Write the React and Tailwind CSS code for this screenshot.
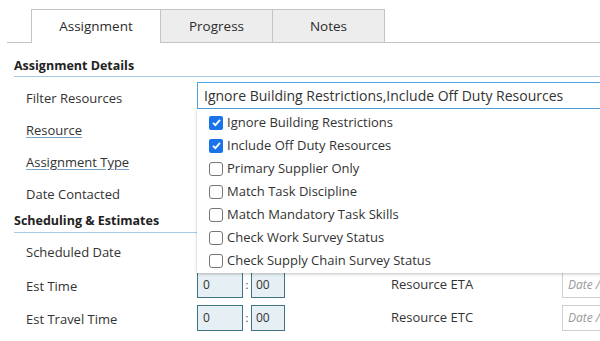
import React from "react";

const options = [
  { label: "Ignore Building Restrictions", checked: true },
  { label: "Include Off Duty Resources", checked: true },
  { label: "Primary Supplier Only", checked: false },
  { label: "Match Task Discipline", checked: false },
  { label: "Match Mandatory Task Skills", checked: false },
  { label: "Check Work Survey Status", checked: false },
  { label: "Check Supply Chain Survey Status", checked: false },
];

const Check = ({ checked }) =>
  checked ? (
    <span className="w-[14px] h-[14px] rounded-[2px] bg-[#1a73e8] flex items-center justify-center shrink-0">
      <svg width="11" height="11" viewBox="0 0 12 12">
        <path d="M2.2 6.3 L4.8 8.9 L9.8 3.2" fill="none" stroke="#fff" strokeWidth="2" />
      </svg>
    </span>
  ) : (
    <span className="w-[14px] h-[14px] rounded-[3px] border border-[#767676] bg-white shrink-0" />
  );

const Tab = ({ label, active }) => (
  <div
    className={
      active
        ? "w-[130px] h-[34px] flex items-center justify-center border border-b-0 border-[#c4c4c4] bg-white text-[13.5px] text-[#2b2b2b]"
        : "w-[112px] h-[34px] flex items-center justify-center border border-l-0 border-[#c4c4c4] bg-[#ededed] text-[13.5px] text-[#2b2b2b]"
    }
  >
    {label}
  </div>
);

const Row = ({ label, link, h, children }) => (
  <div className={`flex items-center ${h}`}>
    <div className="w-[197px] pl-[26px] shrink-0">
      <span
        className={
          link
            ? "text-[13px] text-[#333] underline decoration-[#7aa4cc] underline-offset-2"
            : "text-[13px] text-[#333]"
        }
      >
        {label}
      </span>
    </div>
    {children}
  </div>
);

const TimeBoxes = () => (
  <div className="flex items-center">
    <div className="w-[46px] h-[26px] bg-[#e5eff4] border border-[#3f7482] text-[12px] text-[#333] pl-[5px] flex items-center">
      0
    </div>
    <span className="w-[8px] text-center text-[11px] text-[#333]">:</span>
    <div className="w-[34px] h-[26px] bg-[#e5eff4] border border-[#3f7482] text-[12px] text-[#333] pl-[4px] flex items-center">
      00
    </div>
  </div>
);

const DateBox = () => (
  <div className="ml-auto w-[38px] h-[26px] border border-r-0 border-[#cfcfcf] pl-[5px] flex items-center text-[12px] italic text-[#9a9a9a] overflow-hidden whitespace-nowrap">
    Date /
  </div>
);

export default function App() {
  return (
    <div className="w-[600px] h-[341px] bg-white overflow-hidden relative font-['Open_Sans',sans-serif]">
      <div className="flex items-end pt-[9px] pl-[7px]">
        <div className="w-[24px] border-b border-[#c4c4c4]" />
        <Tab label="Assignment" active />
        <Tab label="Progress" />
        <Tab label="Notes" />
        <div className="flex-1 border-b border-[#c4c4c4]" />
      </div>

      <div className="ml-[14px] mt-[13px] h-[21px] flex items-center border-b border-[#a8c8e6] text-[12.5px] font-bold text-[#222]">
        Assignment Details
      </div>

      <div className="pt-[4px]">
        <Row label="Filter Resources" h="h-[32px]">
          <div className="flex-1 h-[27px] mb-[4px] border border-r-0 border-[#4fa3e0] flex items-center pl-[6px] text-[14px] text-[#333] whitespace-nowrap">
            Ignore Building Restrictions,Include Off Duty Resources
          </div>
        </Row>
        <Row label="Resource" link h="h-[32px]" />
        <Row label="Assignment Type" link h="h-[32px]" />
        <Row label="Date Contacted" h="h-[32px]" />
      </div>

      <div className="ml-[14px] w-[183px] h-[24px] flex items-end pb-[1px] border-b border-[#a8c8e6] text-[12.5px] font-bold text-[#222]">
        Scheduling &amp; Estimates
      </div>

      <Row label="Scheduled Date" h="h-[36px]" />
      <Row label="Est Time" h="h-[32px]">
        <TimeBoxes />
        <span className="ml-[106px] text-[13px] text-[#333]">Resource ETA</span>
        <DateBox />
      </Row>
      <Row label="Est Travel Time" h="h-[34px]">
        <TimeBoxes />
        <span className="ml-[106px] text-[13px] text-[#333]">Resource ETC</span>
        <DateBox />
      </Row>

      <div className="absolute left-[197px] top-[109px] w-[420px] bg-white shadow-[0_1px_3px_rgba(0,0,0,0.25)] pt-[2px] pb-[1px]">
        {options.map((o) => (
          <div key={o.label} className="h-[23px] flex items-center pl-[12px] gap-[4px]">
            <Check checked={o.checked} />
            <span className="text-[13px] text-[#333] whitespace-nowrap">{o.label}</span>
          </div>
        ))}
      </div>
    </div>
  );
}
